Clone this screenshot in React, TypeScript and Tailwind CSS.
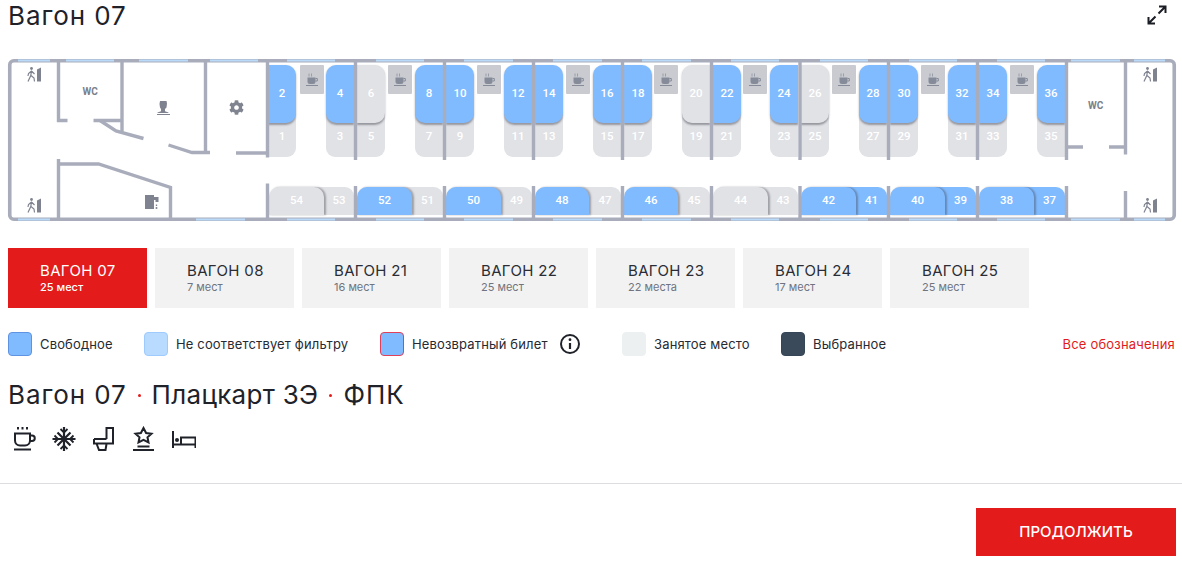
import { FaCog } from "react-icons/fa";

const FONT = "[font-family:Inter,'Noto_Sans',sans-serif]";

const wall = "#a9adbb";
const topWindows = [18, 66, 139, 210, 287, 376, 464, 553, 642, 731, 820, 909, 997, 1071, 1134];
const topWindowW = [32, 48, 49, 48, 48, 48, 49, 49, 49, 48, 48, 48, 48, 49, 31];
const botWindows = [18, 196, 287, 376, 464, 553, 642, 731, 820, 909, 997, 1071, 1134];
const botWindowW = [32, 49, 48, 48, 49, 49, 49, 48, 48, 48, 48, 49, 31];

const tops: { n: number; x: number; w: number; right: boolean; free: boolean }[] = [
  { n: 2, x: 268, w: 28, right: true, free: true },
  { n: 4, x: 326, w: 28, right: false, free: true },
  { n: 6, x: 357, w: 28, right: true, free: false },
  { n: 8, x: 415, w: 28, right: false, free: true },
  { n: 10, x: 446, w: 28, right: true, free: true },
  { n: 12, x: 504, w: 28, right: false, free: true },
  { n: 14, x: 535, w: 28, right: true, free: true },
  { n: 16, x: 593, w: 28, right: false, free: true },
  { n: 18, x: 624, w: 28, right: true, free: true },
  { n: 20, x: 682, w: 28, right: false, free: false },
  { n: 22, x: 713, w: 28, right: true, free: true },
  { n: 24, x: 770, w: 28, right: false, free: true },
  { n: 26, x: 801, w: 28, right: true, free: false },
  { n: 28, x: 859, w: 28, right: false, free: true },
  { n: 30, x: 890, w: 28, right: true, free: true },
  { n: 32, x: 948, w: 28, right: false, free: true },
  { n: 34, x: 979, w: 28, right: true, free: true },
  { n: 36, x: 1037, w: 28, right: false, free: true },
];

const sides: { l: number; x: number; end: number; wallEnd: number; s: number; lf: boolean; sf: boolean }[] = [
  { l: 54, x: 269, end: 324, wallEnd: 354, s: 53, lf: false, sf: false },
  { l: 52, x: 357, end: 412, wallEnd: 443, s: 51, lf: true, sf: false },
  { l: 50, x: 446, end: 501, wallEnd: 532, s: 49, lf: true, sf: false },
  { l: 48, x: 535, end: 589, wallEnd: 621, s: 47, lf: true, sf: false },
  { l: 46, x: 624, end: 678, wallEnd: 710, s: 45, lf: true, sf: false },
  { l: 44, x: 713, end: 768, wallEnd: 798, s: 43, lf: false, sf: false },
  { l: 42, x: 801, end: 856, wallEnd: 887, s: 41, lf: true, sf: true },
  { l: 40, x: 890, end: 945, wallEnd: 976, s: 39, lf: true, sf: true },
  { l: 38, x: 979, end: 1034, wallEnd: 1065, s: 37, lf: true, sf: true },
];

const tables = [300, 388, 477, 566, 654, 743, 832, 921, 1010];
const seatWalls = [355.5, 444.5, 533.5, 622.5, 711.5, 800, 888.5, 977.5, 1066.5];
const tabs = [
  ["ВАГОН 07", "25 мест"],
  ["ВАГОН 08", "7 мест"],
  ["ВАГОН 21", "16 мест"],
  ["ВАГОН 22", "25 мест"],
  ["ВАГОН 23", "22 места"],
  ["ВАГОН 24", "17 мест"],
  ["ВАГОН 25", "25 мест"],
];

function Cup() {
  return (
    <svg width="14" height="14" viewBox="0 0 14 14" fill="none" className="block">
      <path d="M4 0.5v3M6.5 0.5v3" stroke="#8d92a0" strokeWidth="0.8" />
      <path d="M2.5 4.5h8v4a2.5 2.5 0 0 1-2.5 2.5h-3a2.5 2.5 0 0 1-2.5-2.5z" fill="#868b99" />
      <path d="M10.5 5.5h1.8v2.5H10.5" stroke="#868b99" strokeWidth="1" />
      <path d="M1 12.5h12" stroke="#868b99" strokeWidth="1" />
    </svg>
  );
}

function Exit({ x, y }: { x: number; y: number }) {
  return (
    <g transform={`translate(${x} ${y})`} fill="none" stroke="#7f8390">
      <circle cx="4.5" cy="1.5" r="1.4" fill="#7f8390" stroke="none" />
      <path d="M4.5 3.5L3.8 8.5L1 14.5M4 8.5L7 11L7.5 14.5M4.5 4L1.5 6.5L1 9M4.5 4L7.5 7" strokeWidth="1.2" />
      <path d="M10 2.5L14 0.5V14.5H10z" fill="#7f8390" stroke="none" />
    </g>
  );
}

function Plan() {
  const W = { stroke: wall, strokeWidth: 3.4, fill: "none" };
  return (
    <svg width="1182" height="166" viewBox="0 58 1182 166" className="absolute left-0 top-0 block">
      <rect x="9.75" y="60.75" width="1164.5" height="158.5" rx="4" fill="none" stroke={wall} strokeWidth="3.6" />
      {topWindows.map((x, i) => (
        <rect key={i} x={x} y="59.5" width={topWindowW[i]} height="2" fill="#b9daf8" />
      ))}
      {botWindows.map((x, i) => (
        <rect key={i} x={x} y="218.5" width={botWindowW[i]} height="2" fill="#b9daf8" />
      ))}
      <path d="M58.5 60V122M57 120.5H67.5M93.5 120.5H122M122 60V131.5" {...W} />
      <path d="M100 120.5L116 131L143.5 138.5M168.5 145L192 152.5H210M205.5 60V152M236 153H268" {...W} />
      <path d="M267.5 60V157.5M267.5 183.5V219M58.5 159V219M58.5 164H98.5L170.5 187.5V219" {...W} />
      {seatWalls.map((x) => (
        <path key={x} d={`M${x} 60V160M${x} 186V219`} {...W} />
      ))}
      <path d="M1066 147H1083M1109 147H1126M1125.5 60V154.5M1125.5 191V219" {...W} />
      <Exit x={27} y={67} />
      <Exit x={27} y={198} />
      <Exit x={1143} y={67} />
      <Exit x={1143} y={198} />
      {/* person */}
      <path
        d="M160 101h6.5l0.5 2.5-0.5 4-1.5 1.5v2.2l3.5 1.3v0.5h-11v-0.5l3.5-1.3v-2.2l-1-1.5-0.5-3.5z"
        fill="#7f8390"
      />
      <path d="M157 114.5H170" stroke="#7f8390" strokeWidth="1" />
      {/* faucet */}
      <path d="M145 195h9v2h4.5v5h-3v-2h-1.5v9h-9z" fill="#7f8390" />
      <path d="M156.5 204.5v1.5" stroke="#7f8390" strokeWidth="1.3" />
      <circle cx="156.5" cy="208" r="1" fill="#7f8390" />
    </svg>
  );
}

function Num({ n }: { n: number }) {
  return <span className="text-[11.5px] font-medium text-white [font-family:Roboto,sans-serif]">{n}</span>;
}

function Scheme() {
  return (
    <div className="relative h-[166px] w-[1182px]">
      {/* seats: positions on the carriage plan */}
      {tops.map((t) => (
        <div key={t.n}>
          <div
            className={`absolute flex items-end justify-center bg-[#e1e2e6] pb-[12px] ${t.right ? "rounded-br-[9px]" : "rounded-bl-[9px]"}`}
            style={{ left: t.x, top: 100 - 58, width: t.w, height: 57 }}
          >
            <Num n={t.n - 1} />
          </div>
          <div
            className={`absolute flex items-center justify-center shadow-[0_1.5px_2px_rgba(60,60,70,0.45)] ${t.right ? "rounded-r-[10px]" : "rounded-l-[10px]"} ${t.free ? "bg-[#80bbff]" : "bg-[#e1e2e6]"}`}
            style={{ left: t.x, top: 65 - 58, width: t.w, height: 58 }}
          >
            <Num n={t.n} />
          </div>
        </div>
      ))}
      {tables.map((x) => (
        <div
          key={x}
          className="absolute flex h-[29px] w-[24px] items-center justify-center rounded-[1px] bg-[#c9cbd0]"
          style={{ left: x, top: 65 - 58 }}
        >
          <Cup />
        </div>
      ))}
      {sides.map((s) => (
        <div key={s.l}>
          <div
            className={`absolute flex h-[28px] items-center justify-center rounded-tr-[9px] pl-[24px] ${s.sf ? "bg-[#80bbff]" : "bg-[#e1e2e6]"}`}
            style={{ left: s.end - 24, top: 187 - 58, width: s.wallEnd - s.end + 24 }}
          >
            <Num n={s.s} />
          </div>
          <div
            className={`absolute flex h-[28px] items-center justify-center rounded-t-[10px] shadow-[1.5px_0_2px_rgba(60,60,70,0.4)] ${s.lf ? "bg-[#80bbff]" : "bg-[#e1e2e6]"}`}
            style={{ left: s.x, top: 187 - 58, width: s.end - s.x }}
          >
            <Num n={s.l} />
          </div>
        </div>
      ))}
      <div
        className="absolute text-[10px] font-bold text-[#7b7f8a] [font-family:Roboto,sans-serif]"
        style={{ left: 82.5, top: 84 - 58 }}
      >
        WC
      </div>
      <div
        className="absolute text-[10px] font-bold text-[#7b7f8a] [font-family:Roboto,sans-serif]"
        style={{ left: 1088, top: 98 - 58 }}
      >
        WC
      </div>
      <FaCog className="absolute text-[15px] text-[#7f8490]" style={{ left: 228.5, top: 99.5 - 58 }} />
      <Plan />
    </div>
  );
}

function Legend({ box, label, cls }: { box: string; label: string; cls: string }) {
  return (
    <div className={`flex items-center gap-2 ${cls}`}>
      <div className={`h-6 w-6 rounded-[4px] border ${box}`} />
      <span className="relative top-px whitespace-nowrap text-[13px] tracking-[0.15px] text-[#262a33]">{label}</span>
    </div>
  );
}

function Expand() {
  return (
    <svg width="20" height="20" viewBox="0 0 20 20" fill="none" stroke="#1a1d24" strokeWidth="2" className="block">
      <path d="M11.5 8.5L18 2M12 1.5H18.5V8" />
      <path d="M8.5 11.5L2 18M8 18.5H1.5V12" />
    </svg>
  );
}

function Amenities() {
  const s = { stroke: "#1f2229", strokeWidth: 2, fill: "none" };
  return (
    <div className="mt-[15px] flex h-[26px] items-center pl-[13px]">
      <svg width="24" height="26" viewBox="0 0 24 26" className="block">
        <path d="M5 1v2.5M9.5 1v2.5M14 1v2.5" {...s} />
        <path d="M2 7.5h15v7a5 5 0 0 1-5 5h-5a5 5 0 0 1-5-5z" {...s} />
        <path d="M17 9.5h2a2.5 2.5 0 0 1 0 5.5h-2" {...s} />
        <path d="M1 23.5h17" {...s} />
      </svg>
      <svg width="24" height="26" viewBox="0 0 24 26" className="ml-[15px] block">
        <path d="M12 1v24M0.5 13h23M5.5 6.5l13 13M18.5 6.5l-13 13" {...s} strokeWidth="2.2" />
        <path d="M8.5 3L12 6.5 15.5 3M8.5 23L12 19.5 15.5 23M2.5 9.5L6 13l-3.5 3.5M21.5 9.5L18 13l3.5 3.5" {...s} strokeWidth="1.8" />
      </svg>
      <svg width="24" height="26" viewBox="0 0 24 26" className="ml-4 block">
        <path d="M14.5 13V2h6.5V17.5h-7" {...s} />
        <path d="M2 13h12.5M2 13v4.5h12M4.5 17.5l2.5 6.5h6.5l1-6" {...s} />
      </svg>
      <svg width="24" height="26" viewBox="0 0 24 26" className="ml-4 block">
        <path d="M11.5 2l2.6 5 5.4.7-4 3.6 1 5.2-5-2.6-5 2.6 1-5.2-4-3.6 5.4-.7z" {...s} />
        <path d="M5.5 20.5h12M1 24h21" {...s} />
      </svg>
      <svg width="24" height="26" viewBox="0 0 24 26" className="ml-[16px] block">
        <path d="M1 5v17M1 18.5h23M23.5 22v-10.5H9V18" {...s} />
        <circle cx="5" cy="14" r="2" fill="#1f2229" />
      </svg>
    </div>
  );
}

export default function App() {
  return (
    <div className={`h-[563px] w-[1182px] overflow-hidden bg-white text-[#1f2229] ${FONT}`}>
      <div className="flex h-[58px] items-start justify-between pl-2 pr-[15px]">
        <h1 className="text-[26px] font-normal leading-[32px] tracking-[0.9px]">Вагон 07</h1>
        <div className="pt-[5px]">
          <Expand />
        </div>
      </div>
      <Scheme />
      <div className="mt-6 flex gap-2 pl-2">
        {tabs.map(([a, b], i) => (
          <div
            key={a}
            className={`flex h-[60px] w-[139px] flex-col justify-center pl-8 ${i === 0 ? "bg-[#e31b1b] text-white" : "bg-[#f2f2f2] text-[#2a2d35]"}`}
          >
            <div className="text-[15px] font-normal leading-[18px] tracking-[0.35px]">{a}</div>
            <div className={`text-[11px] leading-[14px] ${i === 0 ? "font-medium" : "text-[#6f7480]"}`}>{b}</div>
          </div>
        ))}
      </div>
      <div className="relative mt-6 flex h-6 items-center pl-2">
        <Legend box="border-[#5f92e0] bg-[#80bbff]" label="Свободное" cls="w-[136px]" />
        <Legend box="border-[#9ecbff] bg-[#b9dbff]" label="Не соответствует фильтру" cls="w-[236px]" />
        <Legend box="border-[#e0405a] bg-[#80bbff]" label="Невозвратный билет" cls="w-[179px]" />
        <svg width="22" height="22" viewBox="0 0 22 22" className="block" fill="none">
          <circle cx="11" cy="11" r="9" stroke="#1f2229" strokeWidth="2" />
          <path d="M11 10v6" stroke="#1f2229" strokeWidth="2.2" />
          <circle cx="11" cy="6.7" r="1.4" fill="#1f2229" />
        </svg>
        <Legend box="border-[#ecf0f1] bg-[#ecf0f1]" label="Занятое место" cls="ml-[41px] w-[159px]" />
        <Legend box="border-[#354657] bg-[#3a4a5b]" label="Выбранное" cls="w-[150px]" />
        <span className="relative top-px ml-auto pr-[7px] text-[13px] tracking-[0.2px] text-[#e31b1b]">Все обозначения</span>
      </div>
      <div className="mt-[23px] flex h-8 items-center pl-2 text-[26px] leading-8">
        <span className="tracking-[0.9px]">Вагон 07</span>
        <span className="mx-[11px] h-[3px] w-[3px] rounded-full bg-[#e31b1b]" />
        <span className="tracking-[0.3px]">Плацкарт 3Э</span>
        <span className="mx-[11px] h-[3px] w-[3px] rounded-full bg-[#e31b1b]" />
        <span className="tracking-[1px]">ФПК</span>
      </div>
      <Amenities />
      <div className="mt-[31px] h-px w-full bg-[#dcdde0]" />
      <div className="mt-6 flex justify-end pr-[6px]">
        <button className="flex h-12 w-[200px] items-center justify-center bg-[#e31b1b] text-[15px] font-medium text-white">
          ПРОДОЛЖИТЬ
        </button>
      </div>
    </div>
  );
}
